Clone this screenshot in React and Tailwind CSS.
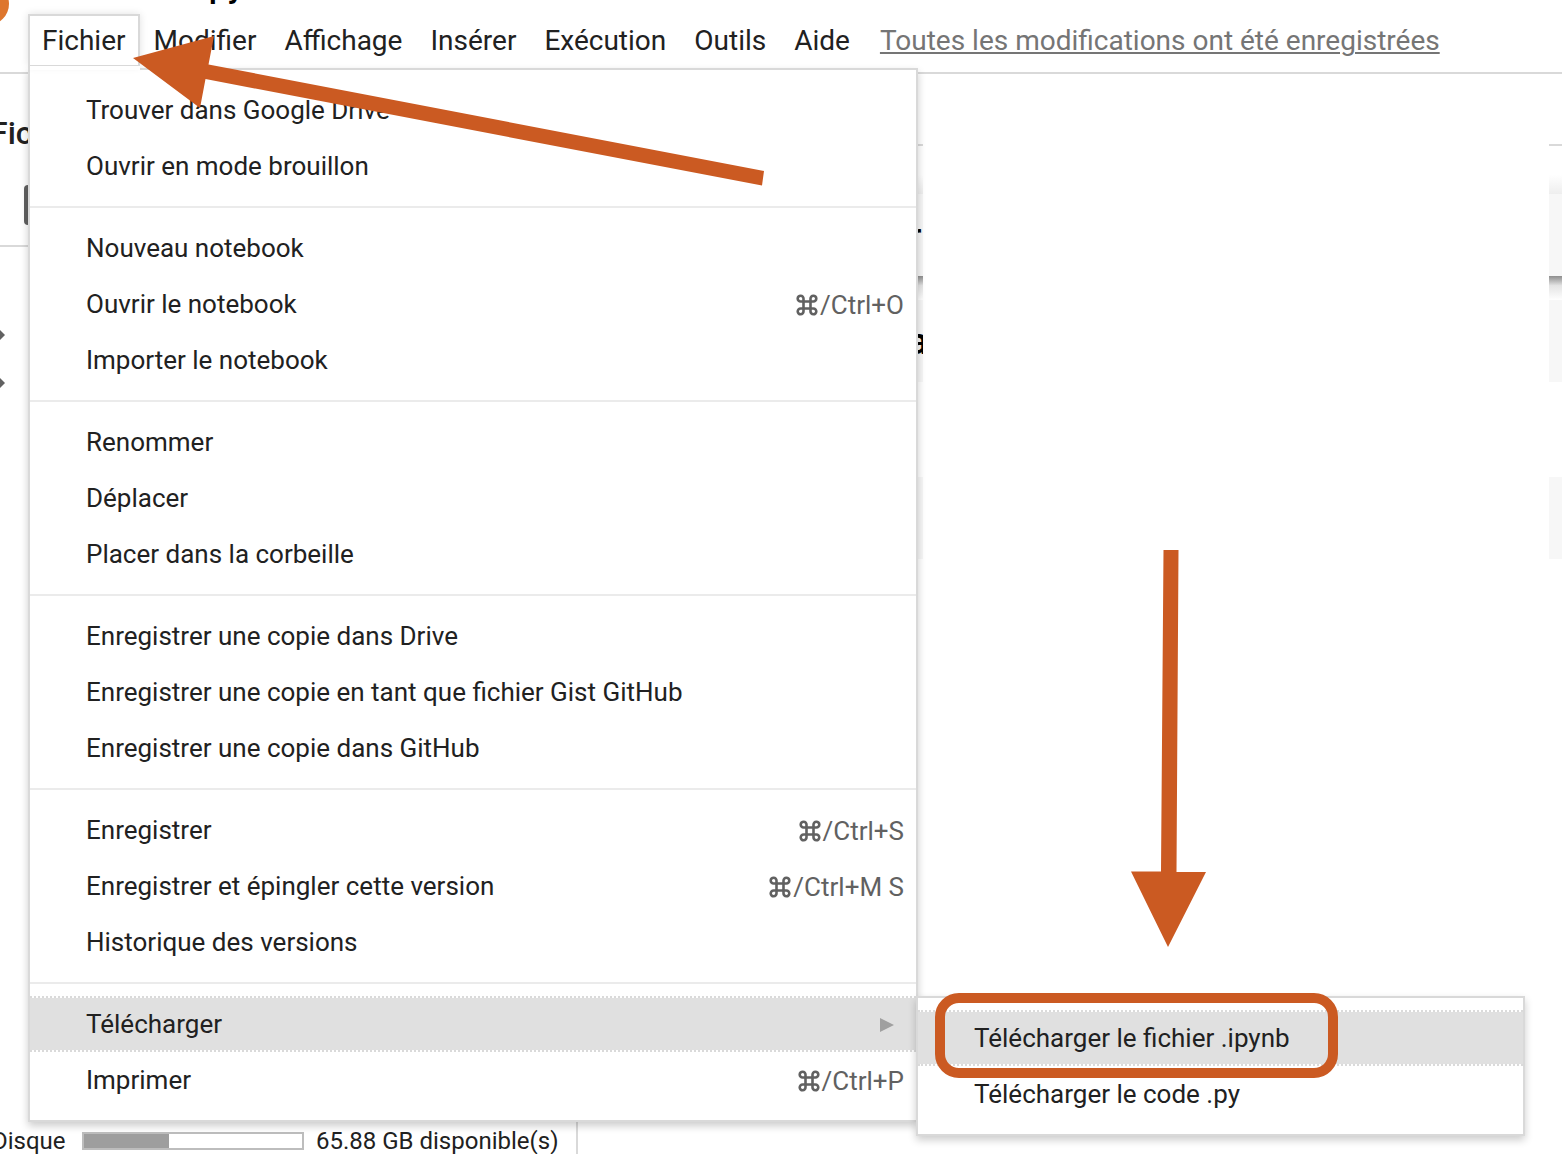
import React from "react";

const menuGroups = [
  [{ label: "Trouver dans Google Drive" }, { label: "Ouvrir en mode brouillon" }],
  [
    { label: "Nouveau notebook" },
    { label: "Ouvrir le notebook", keys: "/Ctrl+O" },
    { label: "Importer le notebook" },
  ],
  [{ label: "Renommer" }, { label: "Déplacer" }, { label: "Placer dans la corbeille" }],
  [
    { label: "Enregistrer une copie dans Drive" },
    { label: "Enregistrer une copie en tant que fichier Gist GitHub" },
    { label: "Enregistrer une copie dans GitHub" },
  ],
  [
    { label: "Enregistrer", keys: "/Ctrl+S" },
    { label: "Enregistrer et épingler cette version", keys: "/Ctrl+M S" },
    { label: "Historique des versions" },
  ],
  [
    {
      label: "Télécharger",
      children: [{ label: "Télécharger le fichier .ipynb", active: true }, { label: "Télécharger le code .py" }],
    },
    { label: "Imprimer", keys: "/Ctrl+P" },
  ],
];

const menuTitles = ["Modifier", "Affichage", "Insérer", "Exécution", "Outils", "Aide"];

function CommandIcon() {
  return (
    <svg className="mr-0.5 h-[22px] w-[22px]" viewBox="0 0 22 22" fill="none" stroke="currentColor" strokeWidth="2.600" aria-label="⌘">
      <path d="M7.500 7.500V4.700A2.900 2.900 0 1 0 4.600 7.500H17.400A2.900 2.900 0 1 0 14.500 4.700V17.300A2.900 2.900 0 1 0 17.400 14.500H4.600A2.900 2.900 0 1 0 7.500 17.300Z" />
    </svg>
  );
}

function MenuItem({ item }) {
  const active = item.active || item.children;
  return (
    <li className="relative" role="none">
      <button
        role="menuitem"
        className={
          "flex h-14 w-full items-center justify-between border-y-2 border-dotted bg-clip-padding pr-3 pl-14 text-left text-[26px] leading-8 text-[#212121] " +
          (active ? "border-[#dadada] bg-[#e0e0e0]" : "border-transparent")
        }
      >
        <span>{item.label}</span>
        {item.keys && (
          <span className="flex items-center pt-0.5 text-[#616161]">
            <CommandIcon />
            {item.keys}
          </span>
        )}
        {item.children && (
          <svg className="mr-2.5 h-4 w-4" viewBox="0 0 16 16" fill="#a0a0a0" aria-hidden="true">
            <path d="M2 2L16 9L2 16Z" />
          </svg>
        )}
      </button>
      {item.children && (
        <ul
          role="menu"
          className="absolute top-0 left-full w-[609px] border-2 border-[#d9d9d9] bg-white py-3 shadow-[0_4px_8px_rgba(0,0,0,0.2)]"
        >
          {item.children.map((child) => (
            <MenuItem key={child.label} item={child} />
          ))}
        </ul>
      )}
    </li>
  );
}

function FileMenu() {
  return (
    <div
      role="menu"
      className="absolute top-[54px] left-0 w-[890px] border-2 border-[#d9d9d9] bg-white py-3 shadow-[0_4px_8px_rgba(0,0,0,0.2)]"
    >
      {menuGroups.map((group, i) => (
        <ul key={i} role="group" className={i > 0 ? "mt-3 border-t-2 border-[#ebebeb] pt-3" : ""}>
          {group.map((item) => (
            <MenuItem key={item.label} item={item} />
          ))}
        </ul>
      ))}
    </div>
  );
}

function Header() {
  return (
    <header className="relative z-20 border-b-2 border-[#d9d9d9] pb-1">
      <svg className="absolute top-0 left-0 h-6 w-3" viewBox="0 0 12 24" aria-hidden="true">
        <circle cx="-12" cy="4" r="21" fill="#de762d" />
      </svg>
      <div className="flex h-[14px] items-start overflow-hidden pl-[200px]">
        <h1 className="-mt-[35px] text-[34px] leading-10 font-medium text-black">ipynb</h1>
      </div>
      <nav className="flex h-[54px] items-start pl-7 text-[28px] text-[#212121]">
        <div className="relative">
          <FileMenu />
          <button className="relative h-[52px] border-2 border-b border-[#d9d9d9] bg-white px-3 leading-8 shadow-[0_0_8px_rgba(0,0,0,0.12)]">
            Fichier
          </button>
          <span className="absolute top-[52px] right-0 left-0 h-1 border-l-2 border-[#d9d9d9] bg-white" />
        </div>
        {menuTitles.map((title) => (
          <button key={title} className="h-[54px] px-[14px] leading-8">
            {title}
          </button>
        ))}
        <a href="#historique" className="ml-4 leading-[54px] text-[#757575] underline decoration-2 underline-offset-2">
          Toutes les modifications ont été enregistrées
        </a>
      </nav>
    </header>
  );
}

function TreeArrow() {
  return (
    <svg className="h-12 w-[6px]" viewBox="0 0 6 48" fill="#616161" aria-hidden="true">
      <path d="M-5 24L0 19L5 24L0 29Z" />
    </svg>
  );
}

function Sidebar() {
  return (
    <aside className="flex w-[578px] shrink-0 flex-col border-r-2 border-[#d9d9d9]">
      <h2 className="-ml-[10px] pt-[39px] text-[32px] leading-10 font-medium text-[#212121]">Fichiers</h2>
      <div className="mt-8 border-b-2 border-[#d9d9d9] pb-5 pl-6">
        <div className="h-10 w-10 rounded bg-[#616161]" />
      </div>
      <div className="flex flex-col pt-16">
        <TreeArrow />
        <TreeArrow />
      </div>
      <div className="-ml-2 mt-auto flex h-[26px] items-center text-[24px] leading-[26px] text-[#212121]">
        <label htmlFor="disk" className="w-[90px]">
          Disque
        </label>
        <div id="disk" className="h-[18px] w-[222px] border-2 border-[#bdbdbd]">
          <div className="h-full w-[39%] bg-[#9e9e9e]" />
        </div>
        <span className="ml-3">65.88 GB disponible(s)</span>
      </div>
    </aside>
  );
}

function Notebook() {
  return (
    <main className="relative min-w-0 grow overflow-hidden">
      <div className="h-[72px] border-b-2 border-[#d9d9d9]" />
      <div className="h-12 bg-linear-to-b from-white from-60% to-[#eeeeee]" />
      <div className="h-[82px] bg-[#f7f7f7] pt-5 pl-[330px] text-[40px] leading-[48px] text-black">r</div>
      <div className="h-6 bg-linear-to-b from-[#8e8e8e] via-[#e4e4e4] via-40% to-white" />
      <div className="h-[82px] bg-[#f7f7f7] pt-[18px] pl-[331px] text-[36px] leading-[48px] font-bold text-black">a</div>
      <div className="h-[95px]" />
      <div className="h-[82px] bg-[#f7f7f7]" />
      <div className="absolute top-2 right-[13px] bottom-0 left-[345px] bg-white" />
    </main>
  );
}

function Annotations() {
  return (
    <>
      <svg
        className="pointer-events-none absolute top-9 left-[133px] z-30 h-[150px] w-[632px]"
        viewBox="133 36 632 150"
        fill="#cb5a22"
        aria-hidden="true"
      >
        <path d="M133 58L214 36L208.500 64.500L764 171L762 185.500L205.500 79L200 108Z" />
      </svg>
      <svg
        className="pointer-events-none absolute top-[550px] left-[1131px] z-30 h-[397px] w-[75px]"
        viewBox="1131 550 75 397"
        fill="#cb5a22"
        aria-hidden="true"
      >
        <path d="M1163.500 550H1178.500L1176.500 872H1206L1168 947L1131 871.500H1161Z" />
      </svg>
      <div className="pointer-events-none absolute top-[993px] left-[935px] z-30 h-[85px] w-[403px] rounded-3xl border-10 border-[#cb5a22]" />
    </>
  );
}

export default function App() {
  return (
    <div className="relative flex h-screen flex-col overflow-hidden bg-white font-['Roboto',sans-serif]">
      <Header />
      <div className="flex min-h-0 grow">
        <Sidebar />
        <Notebook />
      </div>
      <Annotations />
    </div>
  );
}
